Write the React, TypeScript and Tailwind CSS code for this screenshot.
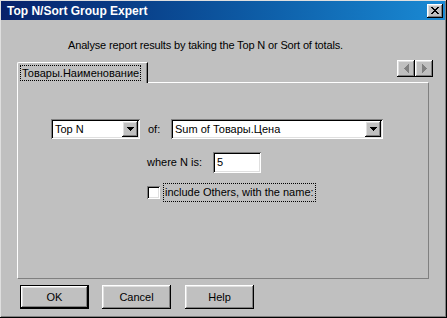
import React from "react";

const raised =
  "shadow-[inset_-1px_-1px_#000,inset_1px_1px_#fff,inset_-2px_-2px_#808080,inset_2px_2px_#dfdfdf]";
const sunken =
  "shadow-[inset_1px_1px_#808080,inset_-1px_-1px_#fff,inset_2px_2px_#000,inset_-2px_-2px_#dfdfdf]";

const font = { fontFamily: '"Liberation Sans", Arial, sans-serif' };

function DownArrow() {
  return (
    <svg width="7" height="4" viewBox="0 0 7 4">
      <path d="M0 0h7L3.5 4z" fill="#000" shapeRendering="crispEdges" />
    </svg>
  );
}

function Combo({ text, w }: { text: string; w: string }) {
  return (
    <div className={`${w} h-[20px] bg-white ${sunken} flex items-center pl-[4px] pr-[2px] text-[11px] text-black`}>
      <span className="flex-1 leading-none">{text}</span>
      <div className={`w-[16px] h-[16px] bg-[#c0c0c0] ${raised} flex items-center justify-center`}>
        <DownArrow />
      </div>
    </div>
  );
}

function Btn({ label, def }: { label: string; def?: boolean }) {
  return (
    <div className={`w-[69px] h-[24px] ${def ? "border border-black" : ""}`}>
      <div className={`w-full h-full bg-[#c0c0c0] ${raised} flex items-center justify-center text-[11px] text-black`}>
        {label}
      </div>
    </div>
  );
}

export default function App() {
  return (
    <div
      style={font}
      className="w-[447px] h-[318px] bg-[#c0c0c0] pl-[1px] pt-[1px] pr-[2px] pb-[2px] shadow-[inset_-1px_-1px_#000,inset_1px_1px_#dfdfdf,inset_-2px_-2px_#808080] flex flex-col select-none"
    >
      {/* title bar */}
      <div className="h-[19px] bg-gradient-to-r from-[#08216b] to-[#1a8ad4] flex items-center pl-[6px] pr-[2px]">
        <span className="flex-1 text-white font-bold text-[12px] leading-none">Top N/Sort Group Expert</span>
        <div className={`w-[16px] h-[14px] bg-[#c0c0c0] ${raised} flex items-center justify-center`}>
          <svg width="8" height="7" viewBox="0 0 8 7" shapeRendering="crispEdges">
            <path d="M0 0h2v1h1v1h2V1h1V0h2v1H7v1H6v1H5v1h1v1h1v1h1v1H6V6H5V5H3v1H2v1H0V6h1V5h1V4h1V3H2V2H1V1H0z" fill="#000" />
          </svg>
        </div>
      </div>

      {/* subtitle */}
      <div className="h-[40px] pt-[19px] pl-[67px] text-[11px] leading-[13px] tracking-[-0.15px] text-black">
        Analyse report results by taking the Top N or Sort of totals.
      </div>

      {/* tab row */}
      <div className="h-[22px] ml-[16px] w-[416px] flex items-start justify-between relative z-10">
        <div className="mt-[2px] h-[21px] w-[131px] bg-[#c0c0c0] border-l border-t border-white rounded-tl-[2px] border-r border-r-black shadow-[inset_-1px_0_#808080] flex items-start pl-[2px] pt-[2px]">
          <div className="border border-dotted border-black px-[1px] h-[16px] flex items-center text-[11px] text-black leading-none">
            Товары.Наименование
          </div>
        </div>
        <div className="flex">
          <div className={`w-[18px] h-[17px] bg-[#c0c0c0] ${raised} flex items-center justify-center`}>
            <svg width="5" height="9" viewBox="0 0 5 9" shapeRendering="crispEdges">
              <path d="M5 0v9L0 4.5z" fill="#808080" />
            </svg>
          </div>
          <div className={`w-[18px] h-[17px] bg-[#c0c0c0] ${raised} flex items-center justify-center`}>
            <svg width="5" height="9" viewBox="0 0 5 9" shapeRendering="crispEdges">
              <path d="M0 0v9L5 4.5z" fill="#808080" />
            </svg>
          </div>
        </div>
      </div>

      {/* panel */}
      <div className="ml-[16px] w-[412px] h-[197px] border-l border-t border-white border-r border-b border-r-[#808080] border-b-[#808080] pt-[36px] text-[11px] text-black">
        <div className="flex items-center">
          <div className="ml-[33px]">
            <Combo text="Top N" w="w-[89px]" />
          </div>
          <span className="ml-[8px] w-[23px]">of:</span>
          <Combo text="Sum of Товары.Цена" w="w-[212px]" />
        </div>
        <div className="flex items-center mt-[13px] ml-[129px]">
          <span className="w-[66px]">where N is:</span>
          <div className={`w-[48px] h-[21px] bg-white ${sunken} flex items-center pl-[4px]`}>5</div>
        </div>
        <div className="flex items-center mt-[10px] ml-[129px]">
          <div className={`w-[13px] h-[13px] bg-white ${sunken}`} />
          <div className="ml-[3px] h-[19px] border border-dotted border-black px-[1px] flex items-center leading-none">
            include Others, with the name:
          </div>
        </div>
      </div>

      {/* buttons */}
      <div className="flex mt-[6px] pl-[19px]">
        <Btn label="OK" def />
        <div className="ml-[13px]">
          <Btn label="Cancel" />
        </div>
        <div className="ml-[14px]">
          <Btn label="Help" />
        </div>
      </div>
    </div>
  );
}
